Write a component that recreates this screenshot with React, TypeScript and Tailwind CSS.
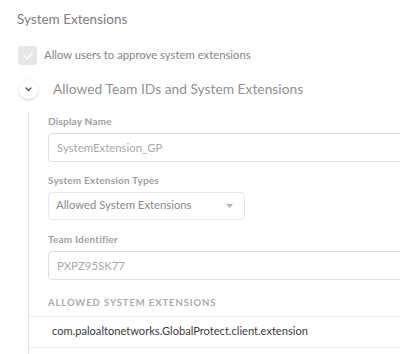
import React from "react";

const font = { fontFamily: "Lato, 'Open Sans', sans-serif" };

function Label({ text }: { text: string }) {
  return <div className="text-[10px] font-bold text-[#a0a0a0] leading-[12px] mb-[6px] tracking-[0.2px]">{text}</div>;
}

export default function App() {
  return (
    <div className="w-[400px] h-[354px] bg-white overflow-hidden" style={font}>
      <div className="pl-[17px] pt-[9px] text-[13.5px] text-[#7d7d7d] leading-[20px]">System Extensions</div>

      <div className="flex items-center pl-[18px] mt-[17px] gap-[7px]">
        <div className="w-[19px] h-[19px] rounded-[3px] bg-[#e6e6e6] flex items-center justify-center">
          <svg width="10" height="8" viewBox="0 0 10 8" fill="none">
            <path d="M1 4L4 7L9 1" stroke="white" strokeWidth="1.3" strokeLinecap="round" strokeLinejoin="round" />
          </svg>
        </div>
        <span className="text-[11.3px] text-[#858585]">Allow users to approve system extensions</span>
      </div>

      <div className="flex items-center pl-[19px] mt-[14px]">
        <div className="w-[19px] h-[19px] rounded-full bg-white shadow-[0_1px_3px_rgba(0,0,0,0.18)] flex items-center justify-center">
          <svg width="7" height="5" viewBox="0 0 7 5" fill="none">
            <path d="M1 1L3.5 3.5L6 1" stroke="#555" strokeWidth="1.3" strokeLinecap="round" strokeLinejoin="round" />
          </svg>
        </div>
        <span className="ml-[15px] text-[13.8px] text-[#909090]">Allowed Team IDs and System Extensions</span>
      </div>

      <div className="ml-[28px] mt-[12px] border-l border-[#e4e4e4] h-[260px]">
        <div className="pl-[19px] pt-[3px] flex flex-col">
          <Label text="Display Name" />
          <div className="h-[29px] w-[360px] border border-[#dedede] rounded-[4px] flex items-center pl-[8px] text-[11.4px] text-[#a8a8a8]">
            SystemExtension_GP
          </div>
          <div className="mt-[12px]">
            <Label text="System Extension Types" />
          </div>
          <div className="h-[28px] w-[197px] border border-[#e8e8e8] rounded-[4px] flex items-center justify-between pl-[7px] pr-[11px] text-[11.3px] text-[#8a8a8a]">
            <span>Allowed System Extensions</span>
            <svg width="7" height="4" viewBox="0 0 7 4"><path d="M0 0H7L3.5 4Z" fill="#b5b5b5" /></svg>
          </div>
          <div className="mt-[13px]">
            <Label text="Team Identifier" />
          </div>
          <div className="h-[29px] w-[360px] border border-[#dedede] rounded-[4px] flex items-center pl-[8px] text-[11.4px] text-[#a8a8a8]">
            PXPZ95SK77
          </div>
        </div>
        <div className="pl-[19px] mt-[17px] text-[9.5px] font-bold tracking-[0.9px] text-[#ababab] leading-[12px] pb-[7px]">
          ALLOWED SYSTEM EXTENSIONS
        </div>
        <div className="border-t border-b border-[#ebebeb] h-[32px] flex items-center pl-[23px] text-[11.1px] text-[#3a3a3a]">
          com.paloaltonetworks.GlobalProtect.client.extension
        </div>
      </div>
    </div>
  );
}
